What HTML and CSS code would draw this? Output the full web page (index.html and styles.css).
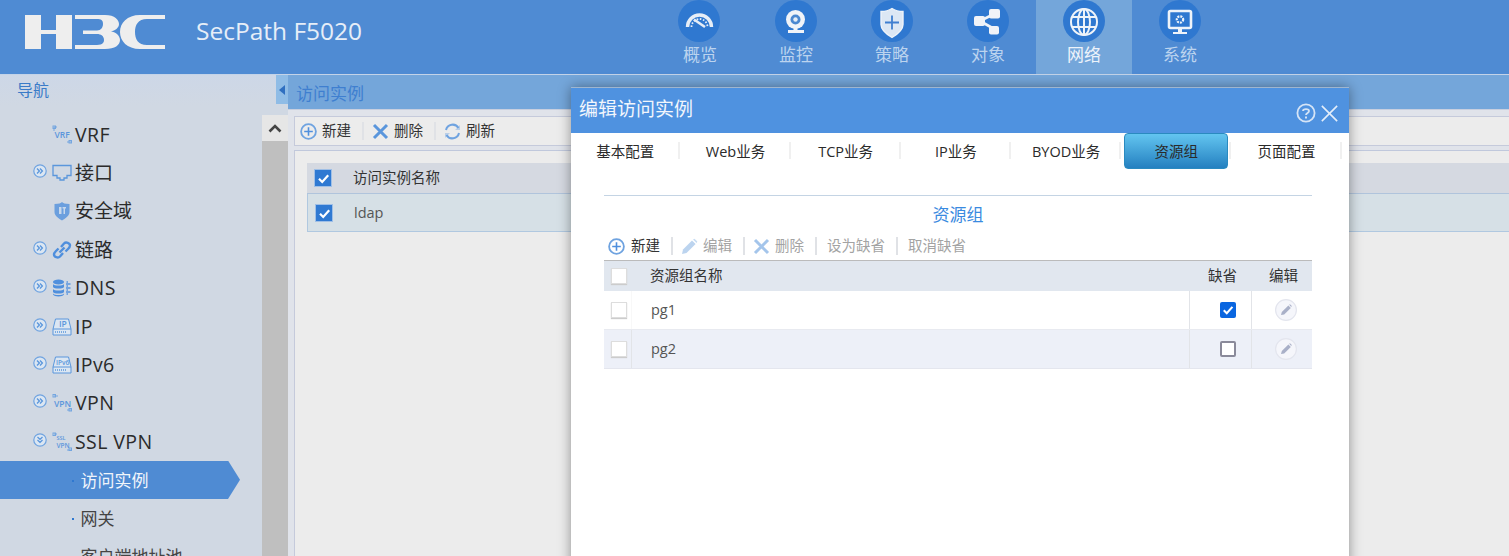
FILE: index.html
```html
<!DOCTYPE html>
<html lang="zh-CN">
<head>
<meta charset="utf-8">
<title>SecPath F5020</title>
<link rel="stylesheet" href="styles.css">
</head>
<body>
<svg class="defs" width="0" height="0" aria-hidden="true">
  <symbol id="i-exp" viewBox="0 0 14 14"><circle cx="7" cy="7" r="6.2" fill="#dbe6f2" stroke="#6fa3e0" stroke-width="1.2"/><path d="M4 4.5 6.4 7 4 9.5M7 4.5 9.4 7 7 9.5" fill="none" stroke="#5a96dc" stroke-width="1.3"/></symbol>
  <symbol id="i-col" viewBox="0 0 14 14"><circle cx="7" cy="7" r="6.2" fill="#dbe6f2" stroke="#6fa3e0" stroke-width="1.2"/><path d="M4.5 4 7 6.4 9.5 4M4.5 7 7 9.4 9.5 7" fill="none" stroke="#5a96dc" stroke-width="1.3"/></symbol>
  <symbol id="i-plus" viewBox="0 0 17 17"><circle cx="8.5" cy="8.5" r="7.4" fill="none" stroke="#6fa3e0" stroke-width="1.8"/><path d="M8.5 4.2v8.6M4.2 8.5h8.6" stroke="#4f8fdd" stroke-width="1.6"/></symbol>
  <symbol id="i-x" viewBox="0 0 17 17"><path d="M2 2 15 15M15 2 2 15" stroke="#5a96dc" stroke-width="3"/></symbol>
  <symbol id="i-pen" viewBox="0 0 17 17"><path d="M1 16 2 11.5 11 2.5 14.6 6 5.5 15Z" fill="#bcd4ef"/><path d="M12 1.5 13.5.8 16.3 3.5 15.6 5Z" fill="#c6dcf2"/></symbol>
  <symbol id="i-edit" viewBox="0 0 22 22"><circle cx="11" cy="11" r="10.4" fill="#f5f6fb" stroke="#e3e5ee" stroke-width="1.2"/><path d="M6 16 6.8 13 13.4 6.6 15.8 9 9.2 15.4Z" fill="#a9b0c8"/><path d="M14.2 5.8 15 5.2 16.8 7 16.2 8Z" fill="#a9b0c8"/></symbol>
  <symbol id="i-check" viewBox="0 0 17 17"><path d="M4 8.8 7.2 12 13.2 5.2" fill="none" stroke="#fff" stroke-width="2.2"/></symbol>
</svg>

<header class="top">
  <div class="brand">
    <svg class="logo" viewBox="0 0 140 34" role="img" aria-label="H3C">
      <path fill="#eeeeee" d="M0 0H16V15H31V0H47V34H31V19H16V34H0Z"/>
      <path fill="#eeeeee" d="M50 0H80C90 0 94 5 94 9 94 13 90 15.500 86 16.500 90 17 95 20 95 25 95 30 90 34 80 34H50V30H72C78 30 79 27 79 25 79 21 76 19 72 19H58V15.500H72C76 15.500 78 12 78 9 78 5 76 4 72 4H50Z"/>
      <path fill="#eeeeee" d="M140 0H115C102 0 95 8 95 17 95 26 102 34 115 34H140V30H122C113 30 110 24 110 17 110 10 113 4 122 4H140Z"/>
    </svg>
    <span class="product">SecPath F5020</span>
  </div>
  <nav class="menu">
    <a class="menu-item">
      <span class="menu-ico"><svg viewBox="0 0 42 42"><path d="M9.500 27A12 12 0 0 1 33.500 27" fill="none" stroke="#e6edf6" stroke-width="3.400"/><path d="M13.500 27A8 8 0 0 1 29.500 27" fill="none" stroke="#e6edf6" stroke-width="1.800" stroke-dasharray="1.600 1.600"/><path d="M16 19.500 27 27" stroke="#e6edf6" stroke-width="2.600"/></svg></span>
      <span class="menu-txt">概览</span>
    </a>
    <a class="menu-item">
      <span class="menu-ico"><svg viewBox="0 0 42 42"><circle cx="20.500" cy="19.500" r="9.500" fill="#f0f3f8"/><circle cx="20.500" cy="19.500" r="5" fill="#4b88d0"/><circle cx="20.500" cy="19.500" r="2.200" fill="#e6edf6"/><path d="M18.500 28h4v2.500h-4ZM13 30h16v3H13Z" fill="#f0f3f8"/></svg></span>
      <span class="menu-txt">监控</span>
    </a>
    <a class="menu-item">
      <span class="menu-ico"><svg viewBox="0 0 42 42"><g transform="translate(0 2.500)"><path d="M10 9C15 9 18 8 21 6 24 8 27 9 32 9V22C32 28 26 32 21 35 16 32 10 28 10 22Z" fill="#dce7f4" stroke="#eef3f9" stroke-width="1.400"/><path d="M21 13V27M14 20H28" stroke="#3f7fd0" stroke-width="1.800"/></g></svg></span>
      <span class="menu-txt">策略</span>
    </a>
    <a class="menu-item">
      <span class="menu-ico"><svg viewBox="0 0 42 42"><g transform="translate(0 1)"><path d="M13 20 29 12M13 20 29 29" stroke="#f0f3f8" stroke-width="2.600"/><rect x="7" y="15" width="11" height="10" rx="2" fill="#f0f3f8"/><rect x="22" y="8" width="11" height="9.500" rx="2" fill="#f0f3f8"/><rect x="22" y="25" width="10" height="8.500" rx="2" fill="#f0f3f8"/></g></svg></span>
      <span class="menu-txt">对象</span>
    </a>
    <a class="menu-item is-active">
      <span class="menu-ico"><svg viewBox="0 0 42 42"><g fill="none" stroke="#eef3f9" stroke-width="2"><circle cx="21" cy="22" r="13"/><ellipse cx="21" cy="22" rx="6" ry="13"/><path d="M21 9V35M9 17H33M9 27H33"/></g></svg></span>
      <span class="menu-txt">网络</span>
    </a>
    <a class="menu-item">
      <span class="menu-ico"><svg viewBox="0 0 42 42"><g transform="translate(0 2)"><rect x="10" y="9" width="22" height="17" rx="1.500" fill="none" stroke="#eef3f9" stroke-width="2.600"/><circle cx="21" cy="17.500" r="3.200" fill="none" stroke="#eef3f9" stroke-width="2.200" stroke-dasharray="2 1"/><path d="M19 27h4v3h-4ZM14 30h14v2H14Z" fill="#eef3f9"/></g></svg></span>
      <span class="menu-txt">系统</span>
    </a>
  </nav>
</header>

<main class="main">
  <aside class="side">
    <div class="side-head">
      <span class="side-title">导航</span>
      <button class="side-toggle" aria-label="收起"></button>
    </div>
    <div class="side-body">
      <ul class="tree">
        <li class="tree-row"><span class="exp"></span><span class="ico"><svg viewBox="0 0 20 20"><path d="M2 2H5M2 2V6M15 17H19" fill="none" stroke="#74a6e0" stroke-width="1"/><rect x="1" y="1" width="2.500" height="2.500" fill="none" stroke="#74a6e0"/><rect x="17" y="15.500" width="2.500" height="2.500" fill="none" stroke="#74a6e0"/><text class="ico-txt" x="2.500" y="12.500">VRF</text></svg></span><span class="tree-lbl tree-en">VRF</span></li>
        <li class="tree-row"><span class="exp"><svg><use href="#i-exp"/></svg></span><span class="ico"><svg viewBox="0 0 20 20"><path d="M1 2.500H19V12.500H15V15H12V17H8V15H5V12.500H1Z" fill="none" stroke="#5a96dc" stroke-width="1.300"/></svg></span><span class="tree-lbl">接口</span></li>
        <li class="tree-row"><span class="exp"></span><span class="ico"><svg viewBox="0 0 20 20"><path d="M2.500 3C7 3 9 2 10 1 11 2 13 3 17.500 3V11C17.500 15 13 17.500 10 19.500 7 17.500 2.500 15 2.500 11Z" fill="#6b9fde"/><path d="M7 6H9.500V13H7ZM10.500 6H14V7.500H13V13H11.500V7.500H10.500Z" fill="#c7d8ec"/></svg></span><span class="tree-lbl">安全域</span></li>
        <li class="tree-row"><span class="exp"><svg><use href="#i-exp"/></svg></span><span class="ico"><svg viewBox="0 0 20 20"><g fill="none" stroke="#4f8fdd" stroke-width="2.400"><path d="M9 7 12 3.500C14 1.500 18 3 18 5.500 18 7 17 8 16 9L13.500 11.500"/><path d="M11 13 8 16.500C6 18.500 2 17 2 14.500 2 13 3 12 4 11L6.500 8.500"/><path d="M7.500 12.500 12.500 7.500"/></g></svg></span><span class="tree-lbl">链路</span></li>
        <li class="tree-row"><span class="exp"><svg><use href="#i-exp"/></svg></span><span class="ico"><svg viewBox="0 0 20 20"><g fill="#4f8fdd"><ellipse cx="6.500" cy="4" rx="5.500" ry="2.500"/><path d="M1 6C2 8 11 8 12 6V9C11 11 2 11 1 9ZM1 11C2 13 11 13 12 11V14C11 16 2 16 1 14Z"/><path d="M1 15.500C2 17.500 11 17.500 12 15.500V16.500C11 19 2 19 1 16.500Z"/><path d="M14.500 3H16V5H18.500V7H16V9H18.500V11H16V13H18.500V15H16V17H14.500V15H14V13H14.500V11H14V9H14.500V7H14V5H14.500Z" opacity=".7"/></g></svg></span><span class="tree-lbl tree-en">DNS</span></li>
        <li class="tree-row"><span class="exp"><svg><use href="#i-exp"/></svg></span><span class="ico"><svg viewBox="0 0 20 20"><path d="M3.500 2H16.500L19 12V18H1V12Z" fill="#dbe6f2" stroke="#5a96dc"/><path d="M1 12H19" stroke="#5a96dc"/><path d="M3 15H15" stroke="#5a96dc" stroke-width="1.500" stroke-dasharray="1 1"/><text class="ico-txt" x="7" y="9.500">IP</text></svg></span><span class="tree-lbl tree-en">IP</span></li>
        <li class="tree-row"><span class="exp"><svg><use href="#i-exp"/></svg></span><span class="ico"><svg viewBox="0 0 20 20"><path d="M3.500 2H16.500L19 12V18H1V12Z" fill="#dbe6f2" stroke="#5a96dc"/><path d="M1 12H19" stroke="#5a96dc"/><path d="M3 15H15" stroke="#5a96dc" stroke-width="1.500" stroke-dasharray="1 1"/><text class="ico-txt ico-txt-sm" x="4" y="9.500">IPv6</text></svg></span><span class="tree-lbl tree-en">IPv6</span></li>
        <li class="tree-row"><span class="exp"><svg><use href="#i-exp"/></svg></span><span class="ico"><svg viewBox="0 0 20 20"><path d="M2 3H6M15 17H19" fill="none" stroke="#74a6e0"/><rect x="1" y="1.500" width="2.500" height="2.500" fill="none" stroke="#74a6e0"/><rect x="17" y="15.500" width="2.500" height="2.500" fill="none" stroke="#74a6e0"/><text class="ico-txt" x="2" y="13.500">VPN</text></svg></span><span class="tree-lbl tree-en">VPN</span></li>
        <li class="tree-row"><span class="exp"><svg><use href="#i-col"/></svg></span><span class="ico"><svg viewBox="0 0 20 20"><path d="M2 2H5M15 18H19" fill="none" stroke="#74a6e0"/><rect x="1" y="1" width="2.500" height="2.500" fill="none" stroke="#74a6e0"/><rect x="17" y="16" width="2.500" height="2.500" fill="none" stroke="#74a6e0"/><text class="ico-txt ico-txt-xs" x="4.500" y="8">SSL</text></svg><svg class="ico-over" viewBox="0 0 20 20"><text class="ico-txt ico-txt-sm" x="4.500" y="15.500">VPN</text></svg></span><span class="tree-lbl tree-en">SSL VPN</span></li>
        <li class="tree-sub is-current"><span class="dot"></span><span class="sub-lbl">访问实例</span></li>
        <li class="tree-sub"><span class="dot"></span><span class="sub-lbl">网关</span></li>
        <li class="tree-sub"><span class="dot"></span><span class="sub-lbl">客户端地址池</span></li>
      </ul>
      <div class="scroll">
        <div class="scroll-up"><svg viewBox="0 0 14 10"><path d="M1.500 8.500 7 3 12.500 8.500" fill="none" stroke="#444" stroke-width="2.600"/></svg></div>
      </div>
    </div>
  </aside>

  <section class="content">
    <div class="page-title">访问实例</div>
    <div class="page-body">
      <div class="toolbar">
        <span class="tool"><svg class="tool-ico"><use href="#i-plus"/></svg>新建</span>
        <span class="tool-sep"></span>
        <span class="tool"><svg class="tool-ico"><use href="#i-x"/></svg>删除</span>
        <span class="tool-sep"></span>
        <span class="tool"><svg class="tool-ico" viewBox="0 0 17 17"><path d="M2 7A6.800 6.800 0 0 1 14.500 5" fill="none" stroke="#6fa3e0" stroke-width="2"/><path d="M15 10A6.800 6.800 0 0 1 2.500 12" fill="none" stroke="#6fa3e0" stroke-width="2"/><path d="M16 2V7H11ZM1 15V10H6Z" fill="#6fa3e0" opacity=".4"/></svg>刷新</span>
      </div>
      <div class="panel">
        <div class="list-head"><span class="cb-blue"><svg><use href="#i-check"/></svg></span><span class="list-txt">访问实例名称</span></div>
        <div class="list-row"><span class="cb-blue"><svg><use href="#i-check"/></svg></span><span class="list-txt list-val">ldap</span></div>
      </div>
    </div>
  </section>
</main>

<div class="modal">
  <div class="modal-head">
    <span class="modal-title">编辑访问实例</span>
    <span class="modal-btns">
      <svg class="m-help" viewBox="0 0 20 20"><circle cx="10" cy="10" r="8.600" fill="none" stroke="#d5e4f6" stroke-width="1.800"/><path d="M7 8C7 5.500 13 5.500 13 8 13 10 10 9.800 10 12" fill="none" stroke="#d5e4f6" stroke-width="1.800"/><path d="M9 13.500H11V15.500H9Z" fill="#d5e4f6"/></svg>
      <svg class="m-close" viewBox="0 0 16 16"><path d="M.8.800 15.200 15.200M15.200.800.8 15.200" stroke="#e4eefa" stroke-width="1.500"/></svg>
    </span>
  </div>
  <div class="tabs">
    <span class="tab"><span class="tab-lbl">基本配置</span></span>
    <span class="tab"><span class="tab-lbl">Web业务</span></span>
    <span class="tab"><span class="tab-lbl">TCP业务</span></span>
    <span class="tab"><span class="tab-lbl">IP业务</span></span>
    <span class="tab"><span class="tab-lbl">BYOD业务</span></span>
    <span class="tab"><span class="tab-lbl is-on">资源组</span></span>
    <span class="tab"><span class="tab-lbl">页面配置</span></span>
  </div>
  <div class="modal-body">
    <h2 class="section">资源组</h2>
    <div class="sub-bar">
      <span class="tool tool-first"><svg class="tool-ico"><use href="#i-plus"/></svg>新建</span>
      <span class="tool-sep"></span>
      <span class="tool is-off"><svg class="tool-ico"><use href="#i-pen"/></svg>编辑</span>
      <span class="tool-sep"></span>
      <span class="tool is-off"><svg class="tool-ico x-off"><use href="#i-x"/></svg>删除</span>
      <span class="tool-sep"></span>
      <span class="tool is-off tool-text">设为缺省</span>
      <span class="tool-sep"></span>
      <span class="tool is-off tool-text">取消缺省</span>
    </div>
    <div class="grid">
      <div class="g-row g-head">
        <span class="g-cell"><span class="cb"></span></span>
        <span class="g-cell g-name">资源组名称</span>
        <span class="g-cell g-mid g-h3">缺省</span>
        <span class="g-cell g-mid g-h4">编辑</span>
      </div>
      <div class="g-row g-a">
        <span class="g-cell"><span class="cb"></span></span>
        <span class="g-cell g-name g-val">pg1</span>
        <span class="g-cell g-mid"><span class="cb-on"><svg><use href="#i-check"/></svg></span></span>
        <span class="g-cell g-mid"><svg class="edit-ico"><use href="#i-edit"/></svg></span>
      </div>
      <div class="g-row g-b">
        <span class="g-cell"><span class="cb"></span></span>
        <span class="g-cell g-name g-val">pg2</span>
        <span class="g-cell g-mid"><span class="cb-off"></span></span>
        <span class="g-cell g-mid"><svg class="edit-ico"><use href="#i-edit"/></svg></span>
      </div>
    </div>
  </div>
</div>
</body>
</html>
```
FILE: styles.css
```css
* { box-sizing: border-box; }
html, body { margin: 0; height: 556px; overflow: hidden; }
body {
  font-family: "Open Sans", "Noto Sans CJK SC", sans-serif;
  background: #e0e3ea;
  color: #333;
  position: relative;
}
.defs { position: absolute; }

/* header */
.top {
  display: flex;
  height: 75px;
  background: #4f8bd3;
  border-bottom: 1px solid #c3d3e8;
}
.brand { display: flex; align-items: flex-start; width: 652px; padding-left: 25px; }
.logo { width: 140px; height: 34px; margin-top: 15px; flex: none; }
.product { margin: 13px 0 0 31px; font-size: 24.5px; line-height: 36px; color: #e6eef8; white-space: nowrap; }
.menu { display: flex; }
.menu-item { width: 96px; display: flex; flex-direction: column; align-items: center; color: #bcd4ef; }
.menu-item.is-active { background: #74a6da; color: #edf3fa; }
.menu-ico {
  width: 42px; height: 42px;
  border-radius: 50%;
  background: #2f78d0;
}
.menu-item:first-child .menu-ico { margin-left: -2px; }
.menu-ico svg { display: block; width: 42px; height: 42px; }
.menu-txt { font-size: 17px; line-height: 26px; margin-top: 0; }

/* layout */
.main { display: flex; height: 481px; overflow: hidden; }
.side { width: 288px; flex: none; background: #d0d8e3; display: flex; flex-direction: column; }
.side-head { display: flex; justify-content: space-between; height: 31px; background: linear-gradient(#cdd7e7, #d0d8e3); }
.side-title { margin-left: 17px; font-size: 16px; line-height: 31px; color: #3a7bc8; }
.side-toggle {
  width: 12px; height: 29px; padding: 0; border: 0; background: #8fbce6; position: relative;
}
.side-toggle::after {
  content: ""; position: absolute; left: 3px; top: 10px;
  border: 5px solid transparent; border-left: 0; border-right: 6px solid #2f6fc0;
}
.side-body { display: flex; flex: 1; min-height: 0; }
.tree { list-style: none; margin: 0; padding: 9px 0 0; width: 262px; flex: none; }
.tree-row { display: flex; align-items: center; height: 38.4px; padding: 1px 0 0 33px; white-space: nowrap; }
.exp { width: 14px; height: 14px; margin: -4px 5px 0 0; flex: none; }
.exp svg { display: block; width: 14px; height: 14px; }
.ico { width: 20px; height: 20px; margin-right: 3px; flex: none; position: relative; }
.ico svg { display: block; width: 20px; height: 20px; }
.ico .ico-over { position: absolute; left: 0; top: 0; }
.ico-txt { font-family: "Open Sans", sans-serif; font-size: 8.5px; font-weight: 600; fill: #5a96dc; }
.ico-txt-sm { font-size: 6.5px; }
.ico-txt-xs { font-size: 5.5px; }
.tree-lbl { font-size: 19px; line-height: 26px; color: #2b2b2b; }
.tree-en { font-size: 19.5px; letter-spacing: .4px; }
.tree-sub { display: flex; align-items: center; height: 38.4px; padding: 2px 0 0 72px; white-space: nowrap; }
.dot { width: 2px; height: 2px; margin-right: 6.5px; background: #2f78d0; flex: none; }
.sub-lbl { font-size: 17px; line-height: 26px; color: #444; }
.tree-sub.is-current {
  width: 240px;
  background: #4f8bd3;
  clip-path: polygon(0 0, 228px 0, 100% 50%, 228px 100%, 0 100%);
}
.is-current .sub-lbl { color: #f1f5fb; }
.scroll { width: 26px; margin-top: 9px; background: #bfbfbf; flex: none; }
.scroll-up { height: 26px; background: #e6e6e6; display: flex; align-items: center; justify-content: center; }
.scroll-up svg { width: 14px; height: 10px; }

/* page behind the dialog */
.content { flex: 1; min-width: 0; display: flex; flex-direction: column; }
.page-title { height: 35px; padding: 1px 0 0 8px; background: #74a6da; border-bottom: 1px solid #c8cfdf; font-size: 17px; line-height: 36px; color: #3f7fd0; }
.page-body { flex: 1; display: flex; flex-direction: column; padding: 6px 0 0 6px; }
.toolbar {
  display: flex; align-items: center;
  height: 30px; padding-left: 5px;
  background: #ececec;
  border: 1px solid #c5cadb;
  border-right: 0;
}
.tool { display: flex; align-items: center; gap: 5px; font-size: 14.5px; line-height: 20px; color: #333; white-space: nowrap; }
.tool-ico { width: 17px; height: 17px; flex: none; }
.tool-sep { width: 2px; height: 18px; margin: 0 8px 0 11px; background: #e0e2e6; flex: none; }
.panel { flex: 1; margin-top: 4px; padding: 12px 0 0 12px; background: #ececec; border-top: 1px solid #c0c8dc; border-left: 1px solid #c5cadb; }
.list-head { display: flex; align-items: center; height: 31px; background: #d5d9e1; border-bottom: 1px solid #b0c4dc; padding-left: 7px; }
.list-row { display: flex; align-items: center; height: 38px; background: #d6e0e6; border: 1px solid #b0c8e0; border-top: 0; border-right: 0; padding-left: 7px; }
.cb-blue { width: 18px; height: 18px; background: #2f79d2; border: 1px solid #9fbfe6; flex: none; }
.cb-blue svg { display: block; width: 17px; height: 17px; }
.list-txt { margin-left: 21px; font-size: 14.5px; line-height: 20px; color: #333; }
.list-val { color: #555; }

/* dialog */
.modal {
  position: absolute; left: 571px; top: 87px;
  width: 778px; height: 480px;
  background: #fff;
  box-shadow: 0 0 12px rgba(0, 0, 0, .4);
}
.modal-head {
  display: flex; justify-content: space-between;
  height: 46px; padding: 0 11px 0 8px;
  background: #4f92e0;
  border-top: 1px solid #9fb6cf;
}
.modal-title { font-size: 19px; line-height: 42px; color: #f2f6fc; }
.modal-btns { display: flex; align-items: center; gap: 5px; padding-top: 5px; }
.m-help { width: 20px; height: 20px; }
.m-close { width: 17px; height: 17px; }
.tabs { display: flex; height: 36px; margin-left: -.8px; }
.tab { width: 110.2px; flex: none; position: relative; display: flex; justify-content: center; }
.tab::after { content: ""; position: absolute; right: 0; top: 9px; width: 2px; height: 17px; background: #f0f0f0; }
.tab-lbl { width: 104px; height: 36px; font-size: 14.5px; line-height: 38px; text-align: center; color: #2a2a2a; white-space: nowrap; }
.tab-lbl.is-on { background: linear-gradient(#63c5f0, #2480c0); border: 1px solid #2a8ac0; border-radius: 4px; line-height: 36px; }
.modal-body { margin: 26px 37px 0 33px; border-top: 1px solid #c4d4e4; }
.section { margin: 0; height: 38px; font-size: 17px; font-weight: 400; line-height: 38px; text-align: center; color: #3a8ae0; }
.sub-bar { display: flex; align-items: center; height: 26px; padding: 0 0 2px 4px; }
.tool-first { gap: 6px; }
.is-off { color: #a3a3a3; }
.x-off { opacity: .55; }
.tool-text { margin-left: 2px; }
.grid { border-top: 1px solid #bbb; }
.g-row { display: grid; grid-template-columns: 27px 558px 62px 61px; }
.g-head { height: 30px; background: #e1e7ef; }
.g-a { height: 39px; background: #fff; border-bottom: 1px solid #e8eaf0; }
.g-b { height: 39px; background: #edf0f8; border-bottom: 1px solid #e4e6ee; }
.g-cell { display: flex; align-items: center; font-size: 14.5px; line-height: 20px; color: #333; border-left: 1px solid #e2e4e8; }
.g-cell:first-child { border-left: 0; padding-left: 7px; }
.g-head .g-cell { border-left: 0; }
.g-a .g-cell:nth-child(2) { border-left-color: #f8f8f8; }
.g-name { padding-left: 19px; }
.g-mid { justify-content: center; }
.g-h3 { padding-left: 5px; }
.g-h4 { padding-left: 4px; }
.g-val { color: #555; }
.cb { width: 16px; height: 16px; background: #fff; border: 1px solid #ddd; box-shadow: 0 1px 1px #ccc; }
.cb-on { width: 16px; height: 16px; margin-left: 15px; background: #0a66e0; border-radius: 2px; }
.cb-on svg { display: block; width: 16px; height: 16px; }
.cb-off { width: 16px; height: 16px; margin-left: 15px; background: #fff; border: 2px solid #8a8a9a; border-radius: 2px; }
.edit-ico { width: 22px; height: 22px; margin-left: 7px; }
```
